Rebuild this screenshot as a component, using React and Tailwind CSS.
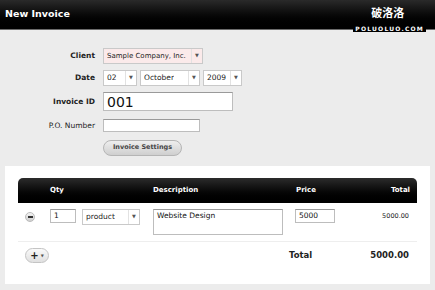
import React from "react";

function Select({ value, className = "", tint = false }) {
  return (
    <div className={`flex items-center justify-between border border-[#c9c9c9] h-[16px] pl-[3px] text-[7.5px] text-[#222] whitespace-nowrap ${tint ? "bg-[#fbeaea]" : "bg-white"} ${className}`}>
      <span className="overflow-hidden">{value}</span>
      <span className="shrink-0 w-[11px] h-full flex items-center justify-center border-l border-[#e2e2e2] text-[5px] text-[#555]">▼</span>
    </div>
  );
}

function Input({ value = "", className = "" }) {
  return (
    <div className={`border border-[#bdbdbd] border-t-[#9a9a9a] bg-white pl-[3px] text-[#111] whitespace-nowrap ${className}`}>{value}</div>
  );
}

export default function App() {
  return (
    <div className="w-[435px] h-[290px] bg-[#ececec] overflow-hidden" style={{ fontFamily: '"DejaVu Sans", Verdana, sans-serif' }}>
      {/* top bar */}
      <header className="h-[30px] bg-gradient-to-b from-[#2a2a2a] to-[#000] border-b border-[#6b6b6b] flex items-center pl-[5px] relative">
        <h1 className="text-white text-[9.5px] font-bold">New Invoice</h1>
        {/* watermark */}
        <div className="absolute right-[9px] top-[6px] flex flex-col items-center leading-none">
          <span className="text-white text-[11px] font-bold leading-[13px] mr-[4px]" style={{ fontFamily: '"Noto Sans CJK SC", sans-serif' }}>破洛洛</span>
          <span className="mt-[6px] text-white text-[6px] font-bold tracking-[1.2px] bg-black px-[2px] leading-[7px]">POLUOLUO.COM</span>
        </div>
      </header>

      {/* form */}
      <section className="grid grid-cols-[95px_1fr] gap-x-[8px] items-center pt-[18px] text-[7.5px]">
        <label className="text-right font-bold text-[#222]">Client</label>
        <Select value="Sample Company, Inc." tint className="w-[100px] text-[7px]" />

        <label className="text-right font-bold text-[#222] mt-[6px]">Date</label>
        <div className="flex gap-[3px] mt-[6px]">
          <Select value="02" className="w-[34px]" />
          <Select value="October" className="w-[60px]" />
          <Select value="2009" className="w-[39px]" />
        </div>

        <label className="text-right font-bold text-[#222] mt-[6px]">Invoice ID</label>
        <Input value="001" className="w-[130px] h-[19px] mt-[6px] text-[14px] leading-[18px]" />

        <label className="text-right text-[#222] mt-[8px]">P.O. Number</label>
        <Input className="w-[97px] h-[13px] mt-[8px]" />

        <span />
        <button className="w-[79px] h-[16px] mt-[8px] rounded-full border border-[#b5b5b5] bg-gradient-to-b from-[#eeeeee] to-[#cfcfcf] text-[6.5px] font-bold text-[#444]">Invoice Settings</button>
      </section>

      {/* items panel */}
      <section className="mx-[5px] mt-[10px] bg-white h-[118px] px-[13px] pt-[12px]">
        <div className="h-[25px] rounded-t-[5px] bg-gradient-to-b from-[#2c2c2c] to-[#000] flex items-center text-white text-[7px] font-bold">
          <span className="ml-[32px] w-[103px]">Qty</span>
          <span className="w-[143px]">Description</span>
          <span>Price</span>
          <span className="ml-auto mr-[7px]">Total</span>
        </div>

        <div className="flex items-start pt-[6px] pb-[6px] border-b border-[#eeeeee] text-[7.5px]">
          <span className="mt-[3px] ml-[7px] w-[10px] h-[10px] rounded-full bg-gradient-to-b from-[#f4f4f4] to-[#cfcfcf] border border-[#bbb] flex items-center justify-center">
            <span className="w-[5px] h-[1.5px] bg-[#333]" />
          </span>
          <Input value="1" className="ml-[15px] w-[26px] h-[14px] leading-[12px]" />
          <Select value="product" className="ml-[6px] w-[58px] h-[14px]" />
          <Input value="Website Design" className="ml-[13px] w-[130px] h-[26px] pt-[1px] leading-[10px]" />
          <Input value="5000" className="ml-[12px] w-[40px] h-[14px] leading-[12px]" />
          <span className="ml-auto mr-[8px] mt-[3px] text-[6.5px] text-[#222]">5000.00</span>
        </div>

        <div className="flex items-center pt-[6px]">
          <button className="ml-[7px] w-[24px] h-[15px] rounded-full border border-[#c4c4c4] bg-gradient-to-b from-[#fafafa] to-[#e0e0e0] flex items-center justify-center gap-[2px]">
            <span className="text-[10px] font-bold leading-none text-[#222]">+</span>
            <span className="text-[4px] text-[#555]">▼</span>
          </button>
          <span className="ml-[240px] text-[8.5px] font-bold text-[#222]">Total</span>
          <span className="ml-auto mr-[8px] text-[8.5px] font-bold text-[#222]">5000.00</span>
        </div>
      </section>
    </div>
  );
}
